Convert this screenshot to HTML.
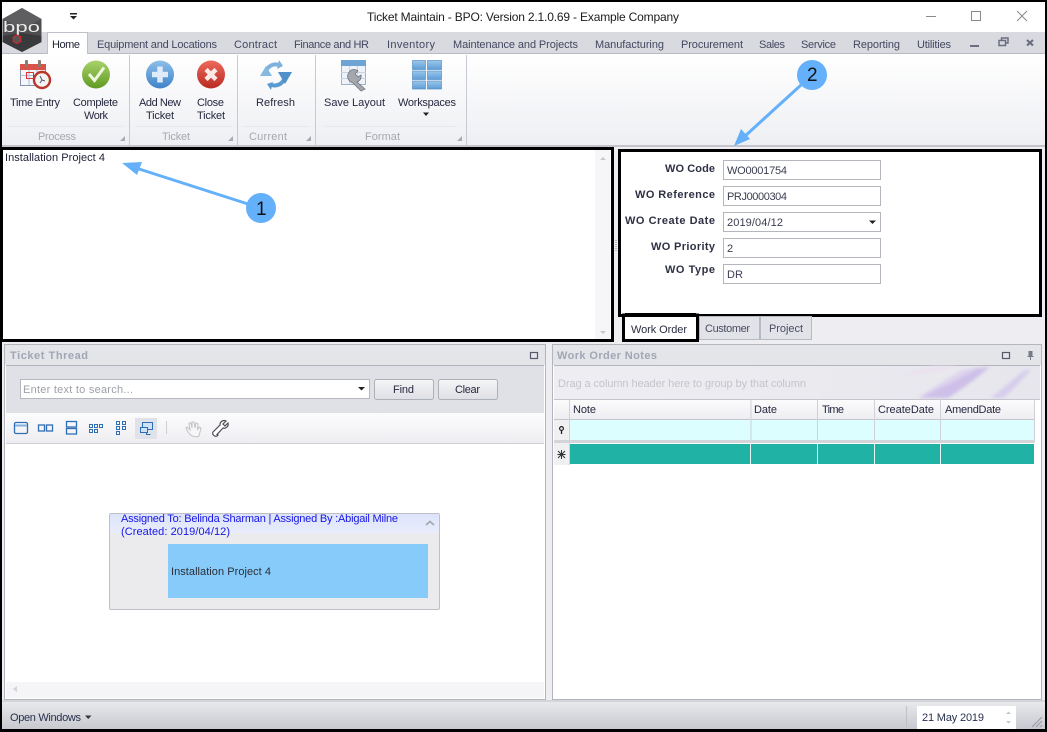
<!DOCTYPE html>
<html><head><meta charset="utf-8"><title>Ticket Maintain</title>
<style>
html,body{margin:0;padding:0;background:#fff}
svg{display:block;width:1047px;height:732px}
text{font-family:"Liberation Sans",sans-serif;font-size:11px;fill:#25283f}
.tab{fill:#43475f}
.grp{fill:#a6a8b0}
.lab{font-weight:bold;fill:#2e3144}
.inp{fill:#3a3d50}
.hd{font-weight:bold;fill:#a2a5b3}
.bl{fill:#1616e6}
</style></head><body>
<svg xmlns="http://www.w3.org/2000/svg" width="1047" height="732" viewBox="0 0 1047 732">
<defs>
<linearGradient id="rib" x1="0" y1="0" x2="0" y2="1"><stop offset="0" stop-color="#fff"/><stop offset="1" stop-color="#eeeff3"/></linearGradient>
<linearGradient id="st" x1="0" y1="0" x2="0" y2="1"><stop offset="0" stop-color="#e8e9ec"/><stop offset="1" stop-color="#c6c8ce"/></linearGradient>
<linearGradient id="grn" x1="0" y1="0" x2="0" y2="1"><stop offset="0" stop-color="#a9d36a"/><stop offset="1" stop-color="#5f9a22"/></linearGradient>
<linearGradient id="blu" x1="0" y1="0" x2="0" y2="1"><stop offset="0" stop-color="#8dbfe8"/><stop offset="1" stop-color="#3e82c8"/></linearGradient>
<linearGradient id="red" x1="0" y1="0" x2="0" y2="1"><stop offset="0" stop-color="#ec6a5c"/><stop offset="1" stop-color="#b92a22"/></linearGradient>
<linearGradient id="cell" x1="0" y1="0" x2="0" y2="1"><stop offset="0" stop-color="#9cc7ea"/><stop offset="1" stop-color="#5c9dd8"/></linearGradient>
<linearGradient id="hdr" x1="0" y1="0" x2="0" y2="1"><stop offset="0" stop-color="#fcfcfd"/><stop offset="1" stop-color="#eeeef2"/></linearGradient>
<linearGradient id="card" x1="0" y1="0" x2="0" y2="1"><stop offset="0" stop-color="#dde4fb"/><stop offset="1" stop-color="#e8ecfb"/></linearGradient>
<linearGradient id="grpb" x1="0" y1="0" x2="1" y2="0"><stop offset="0" stop-color="#eeeef2"/><stop offset="1" stop-color="#e6e6ec"/></linearGradient>
<linearGradient id="btn" x1="0" y1="0" x2="0" y2="1"><stop offset="0" stop-color="#f5f5f7"/><stop offset="1" stop-color="#dfe0e5"/></linearGradient>
<filter id="soft" x="-10%" y="-20%" width="120%" height="140%"><feGaussianBlur stdDeviation="1.500"/></filter>
</defs>

<rect width="1047" height="732" fill="#eeeef2"/>
<!-- title bar -->
<rect x="0" y="0" width="1047" height="32" fill="#fff"/>
<text x="367" y="21" textLength="312" style="font-size:12px;fill:#1c1c1c">Ticket Maintain - BPO: Version 2.1.0.69 - Example Company</text>
<path d="M70 13h7v1.500h-7z" fill="#222"/><path d="M70 16h7l-3.500 3.500z" fill="#222"/>
<path d="M926 16.500h10" stroke="#8a8a8a" fill="none"/>
<rect x="971.500" y="11.500" width="9" height="9" stroke="#8a8a8a" fill="none"/>
<path d="M1017 11l10 10M1027 11l-10 10" stroke="#8a8a8a" fill="none"/>

<!-- tab strip -->
<rect x="0" y="32" width="1047" height="21" fill="#d9dae0"/>
<rect x="0" y="53" width="1047" height="1" fill="#b9bbc4"/>
<rect x="47.500" y="32.500" width="40" height="22" fill="#fff" stroke="#bfc1ca"/>
<rect x="48" y="52" width="39" height="3" fill="#fff"/>
<text x="52" y="48" textLength="28" style="fill:#1f2233">Home</text>
<text class="tab" x="97" y="48" textLength="120">Equipment and Locations</text>
<text class="tab" x="234" y="48" textLength="43">Contract</text>
<text class="tab" x="294" y="48" textLength="75">Finance and HR</text>
<text class="tab" x="387" y="48" textLength="48">Inventory</text>
<text class="tab" x="453" y="48" textLength="125">Maintenance and Projects</text>
<text class="tab" x="595" y="48" textLength="69">Manufacturing</text>
<text class="tab" x="681" y="48" textLength="62">Procurement</text>
<text class="tab" x="759" y="48" textLength="26">Sales</text>
<text class="tab" x="801" y="48" textLength="35">Service</text>
<text class="tab" x="853" y="48" textLength="47">Reporting</text>
<text class="tab" x="917" y="48" textLength="34">Utilities</text>
<rect x="970" y="45" width="9" height="2" fill="#6b6e80"/>
<path d="M999 45.500h6.500v-5h-6.500v5zM1001.500 40.500v-2.500h6.500v5h-2.500" fill="none" stroke="#6b6e80" stroke-width="1.500"/>
<path d="M1027 40l6 5.500M1033 40l-6 5.500" stroke="#6b6e80" stroke-width="2.200" fill="none"/>

<!-- ribbon -->
<rect x="2" y="54" width="1043" height="91" fill="url(#rib)"/>
<rect x="0" y="145" width="1047" height="2" fill="#c4c5cc"/>
<path d="M129.500 55v90M237.500 55v90M315.500 55v90M466.500 55v90" stroke="#c9cad1" fill="none"/>
<path d="M8 126.500h115M136 126.500h96M244 126.500h65M325 126.500h130" stroke="#e6e7ea" fill="none"/>

<!-- Time entry icon -->
<rect x="20.500" y="64.500" width="25" height="21" fill="#f4f6fb" stroke="#8a93ad"/>
<rect x="20" y="64" width="26" height="6" fill="#d9534a"/>
<rect x="25" y="60" width="3" height="7" rx="1" fill="#8a7d70"/>
<rect x="38" y="60" width="3" height="7" rx="1" fill="#8a7d70"/>
<path d="M20.500 75.500h25M29 70v15M37 70v15" stroke="#a9c0e0" fill="none"/>
<rect x="26.500" y="72.500" width="7" height="6" fill="none" stroke="#d33"/>
<circle cx="42" cy="80" r="8" fill="#f3f3f3" stroke="#b8362c" stroke-width="2.400"/>
<path d="M42 80l-2-4M42 80l3 1M42 80l-2 3" stroke="#556" fill="none"/>

<!-- Complete -->
<circle cx="96" cy="74.500" r="14" fill="url(#grn)"/>
<path d="M89 74l5.500 6.500 9.500-13" stroke="#eef6dd" stroke-width="3" fill="none"/>
<!-- Add -->
<circle cx="160" cy="74.500" r="14" fill="url(#blu)"/>
<path d="M160 66.500v16M152 74.500h16" stroke="#dfecf8" stroke-width="5.500" fill="none"/>
<!-- Close -->
<circle cx="211" cy="74.500" r="14" fill="url(#red)"/>
<path d="M206 69.500l10 10M216 69.500l-10 10" stroke="#fbe9e6" stroke-width="4.500" fill="none"/>
<!-- Refresh -->
<path d="M266.500 70a10.500 10.500 0 0 1 14-4.500" fill="none" stroke="#7fb2dc" stroke-width="4"/>
<path d="M284 79.500a10.500 10.500 0 0 1-14 5" fill="none" stroke="#5b9ad0" stroke-width="4"/>
<path d="M260 76l6-10 6 10z" fill="#86b9e0"/>
<path d="M278 72h14l-7 12z" fill="#4f8fca"/>
<path d="M279 60l4 6-6 3z" fill="#7fb2dc"/>
<path d="M271 90l-4-6 6-2z" fill="#5b9ad0"/>
<!-- Save layout -->
<rect x="341.500" y="60.500" width="24" height="24" fill="#eef3f9" stroke="#9fb2c9"/>
<rect x="341" y="60" width="25" height="6" fill="#6ea3d6"/>
<path d="M341 72.500h25M341 78.500h25M349.500 66v18M357.500 66v18" stroke="#c5d3e3" fill="none"/>
<path d="M350 71a6 6 0 0 1 8 0l-3 3 3 3 3-2a6 6 0 0 1-4 7l8 7-4 2-8-8a7 7 0 0 1-5-9z" fill="#a4a8ae" stroke="#70747c" stroke-width=".8"/>
<!-- Workspaces -->
<g fill="url(#cell)" stroke="#5a8fc4" stroke-width=".7">
<rect x="412.500" y="60.500" width="13" height="9"/><rect x="427.500" y="60.500" width="14" height="9"/>
<rect x="412.500" y="71" width="13" height="8.500"/><rect x="427.500" y="71" width="14" height="8.500"/>
<rect x="412.500" y="81" width="13" height="8"/><rect x="427.500" y="81" width="14" height="8"/>
</g>

<text x="10" y="106" textLength="50">Time Entry</text>
<text x="73" y="106" textLength="45">Complete</text>
<text x="84" y="119" textLength="24">Work</text>
<text x="139" y="106" textLength="42">Add New</text>
<text x="146" y="119" textLength="28">Ticket</text>
<text x="197" y="106" textLength="27">Close</text>
<text x="197" y="119" textLength="28">Ticket</text>
<text x="256" y="106" textLength="39">Refresh</text>
<text x="324" y="106" textLength="61">Save Layout</text>
<text x="398" y="106" textLength="58">Workspaces</text>
<path d="M423 112.500h6l-3 3.500z" fill="#222"/>
<text class="grp" x="38" y="140" textLength="38">Process</text>
<text class="grp" x="162" y="140" textLength="28">Ticket</text>
<text class="grp" x="249" y="140" textLength="38">Current</text>
<text class="grp" x="365" y="140" textLength="35">Format</text>
<g fill="#a9abb3"><path d="M125 136v5h-5z"/><path d="M233 136v5h-5z"/><path d="M311 136v5h-5z"/><path d="M462 136v5h-5z"/></g>

<!-- box 1 -->
<rect x="1.500" y="148.500" width="611" height="192" fill="#fff" stroke="#000" stroke-width="3"/>
<rect x="595" y="150" width="15" height="189" fill="#f6f6f8"/>
<path d="M600 160l3-3 3 3zM600 331l3 3 3-3z" fill="#c8c9cf"/>
<text x="5" y="161" textLength="100" style="fill:#20233a">Installation Project 4</text>

<!-- splitter dots -->
<path d="M615.500 240v12M616.500 240v12" stroke="#b4b6bd" stroke-dasharray="1 1" fill="none"/>

<!-- box 2 -->
<rect x="619.500" y="150.500" width="421" height="165" fill="#fff" stroke="#000" stroke-width="3"/>
<text class="lab" x="665" y="172" textLength="50">WO Code</text>
<text class="lab" x="635" y="198" textLength="80">WO Reference</text>
<text class="lab" x="625" y="224" textLength="90">WO Create Date</text>
<text class="lab" x="651" y="250" textLength="64">WO Priority</text>
<text class="lab" x="665" y="273" textLength="50">WO Type</text>
<g fill="#fff" stroke="#b4b6be">
<rect x="723.500" y="160.500" width="157" height="19"/>
<rect x="723.500" y="186.500" width="157" height="19"/>
<rect x="723.500" y="212.500" width="157" height="19"/>
<rect x="723.500" y="238.500" width="157" height="19"/>
<rect x="723.500" y="264.500" width="157" height="19"/>
</g>
<text class="inp" x="727" y="174" textLength="60">WO0001754</text>
<text class="inp" x="727" y="200" textLength="60">PRJ0000304</text>
<text class="inp" x="727" y="226" textLength="56">2019/04/12</text>
<text class="inp" x="727" y="252">2</text>
<text class="inp" x="727" y="278">DR</text>
<path d="M869 220.500h7l-3.500 3.500z" fill="#222"/>

<!-- lower tabs -->
<rect x="699.500" y="316.500" width="60" height="23" fill="#e2e3e8" stroke="#b8bac2"/>
<rect x="760.500" y="316.500" width="51" height="23" fill="#e2e3e8" stroke="#b8bac2"/>
<rect x="623.500" y="315" width="74" height="25.500" fill="#fff" stroke="#000" stroke-width="3"/>
<rect x="625" y="313" width="71" height="4" fill="#000"/>
<text x="631" y="333" textLength="56" style="fill:#2a2d42">Work Order</text>
<text x="705" y="332" textLength="45" style="fill:#4a4d62">Customer</text>
<text x="769" y="332" textLength="34" style="fill:#4a4d62">Project</text>

<!-- Ticket Thread panel -->
<rect x="4.500" y="344.500" width="541" height="355" fill="#fff" stroke="#b3b5bd"/>
<rect x="5" y="345" width="540" height="20" fill="#e4e5e9"/>
<path d="M6 365.500h538" stroke="#b3b5bd"/>
<rect x="6" y="366" width="538" height="47" fill="#e0e1e6"/>
<text class="hd" x="10" y="359" textLength="78">Ticket Thread</text>
<rect x="530.500" y="352.500" width="7" height="6" fill="none" stroke="#55586a" stroke-width="1.200"/>
<rect x="20.500" y="379.500" width="349" height="19" fill="#fff" stroke="#b6b8c0"/>
<text x="23" y="393" textLength="110" style="fill:#9d9fa9">Enter text to search...</text>
<path d="M358 387h7l-3.500 3.500z" fill="#222"/>
<rect x="374.500" y="379.500" width="59" height="20" rx="2" fill="url(#btn)" stroke="#aeb0b8"/>
<rect x="438.500" y="379.500" width="59" height="20" rx="2" fill="url(#btn)" stroke="#aeb0b8"/>
<text x="393" y="393" textLength="21">Find</text>
<text x="455" y="393" textLength="25">Clear</text>

<rect x="6" y="413" width="538" height="30" fill="url(#hdr)"/>
<path d="M6 443.500h538" stroke="#d0d1d7"/>
<!-- toolbar icons -->
<g fill="none" stroke="#2f6db5" stroke-width="1.300">
<rect x="14.500" y="422.500" width="13" height="11" rx="1.500"/><path d="M15 425.500h12" stroke="#7fb0e0" stroke-width="2"/>
<rect x="38.500" y="425" width="6" height="6"/><rect x="46.500" y="425" width="6" height="6"/>
<rect x="66.500" y="421.500" width="10" height="5.500"/><rect x="66.500" y="428.500" width="10" height="5.500"/>
<g stroke-width="1"><rect x="89.500" y="424.500" width="3" height="3"/><rect x="94.500" y="424.500" width="3" height="3"/><rect x="99.500" y="424.500" width="3" height="3"/><rect x="89.500" y="429.500" width="3" height="3"/><rect x="94.500" y="429.500" width="3" height="3"/>
<rect x="116.500" y="421.500" width="3" height="3"/><rect x="122.500" y="421.500" width="3" height="3"/><rect x="116.500" y="426.500" width="3" height="3"/><rect x="122.500" y="426.500" width="3" height="3"/><rect x="116.500" y="431.500" width="3" height="3"/></g>
</g>
<rect x="135" y="418" width="22" height="21" fill="#dfe2e9"/>
<g fill="#cfe2f5" stroke="#2f6db5"><rect x="142.500" y="422.500" width="10" height="7"/><rect x="140.500" y="427.500" width="7" height="5"/></g>
<path d="M146.500 432.500v2h4" stroke="#2f6db5" fill="none"/>
<path d="M166.500 421v13" stroke="#cfd0d6"/>
<path d="M192 436c-3-2-5-5-6-8l1-1 3 3-1-7 2 0 1 5 0-6 2 0 1 6 1-5 2 1-.5 6 1.500-3 2 1-2 8-2 1z" fill="#f6f6f7" stroke="#c2c3c9"/>
<path d="M213 432l7-7a4 4 0 0 1 1.500-3.500 4 4 0 0 1 4.500-.5l-3 3 2 2 3-3a4 4 0 0 1-5 5l-6 6.500 1 .5a2.500 2.500 0 0 1-4 .5 2.500 2.500 0 0 1-1-3.500z" fill="#fff" stroke="#4a4c55" stroke-width="1.200"/>

<!-- card -->
<rect x="109.500" y="513.500" width="330" height="96" rx="1.500" fill="#ebebed" stroke="#bfc0c7"/>
<rect x="110" y="514" width="329" height="19" fill="url(#card)"/>
<text class="bl" x="121" y="522" textLength="277">Assigned To: Belinda Sharman | Assigned By :Abigail Milne</text>
<text class="bl" x="121" y="535" textLength="109">(Created: 2019/04/12)</text>
<path d="M426 525l4-3.500 4 3.500" fill="none" stroke="#a4a6ae" stroke-width="1.600"/>
<rect x="168" y="544" width="260" height="54" fill="#87cbfa"/>
<text x="171" y="575" textLength="100" style="fill:#2b2e3a">Installation Project 4</text>
<!-- h scrollbar -->
<rect x="6" y="682" width="538" height="16" fill="#f5f5f8"/>
<path d="M17 686l-4 3 4 3z" fill="#d3d4d9"/>

<!-- Work Order Notes -->
<rect x="552.500" y="344.500" width="489" height="355" fill="#fff" stroke="#b3b5bd"/>
<rect x="553" y="345" width="488" height="20" fill="#e4e5e9"/>
<path d="M554 365.500h486" stroke="#b3b5bd"/>
<text class="hd" x="557" y="359" textLength="100">Work Order Notes</text>
<rect x="1002.500" y="352.500" width="7" height="6" fill="none" stroke="#55586a" stroke-width="1.200"/>
<path d="M1028.500 351h4v5h1v1h-2.500v3h-1v-3h-2.500v-1h1z" fill="#777a88"/>
<rect x="554" y="366" width="486" height="33" fill="url(#grpb)"/>
<g filter="url(#soft)">
<path d="M918 398c15-10 30-20 45-28l20-4c-15 10-25 20-35 32z" fill="#ddd2ee"/>
<path d="M920 398c15-8 35-16 55-28l15-4c-12 12-30 24-42 32z" fill="#cdbfe8"/>
<path d="M990 398c12-8 22-18 35-28l6 0c-10 10-18 20-28 28z" fill="#d6cdec"/>
<path d="M900 376c15-2 40-6 60-10l-25 0c-12 3-25 6-35 10z" fill="#ecdff0"/>
</g>
<text x="558" y="387" textLength="248" style="fill:#c4c5cc">Drag a column header here to group by that column</text>

<rect x="554" y="399" width="481" height="20" fill="url(#hdr)"/>
<rect x="554" y="399" width="486" height="1" fill="#c3c4cc"/>
<rect x="554" y="419" width="481" height="1" fill="#c3c4cc"/>
<rect x="554" y="420" width="16" height="45" fill="#f0f0f3"/>
<rect x="570" y="420" width="465" height="20" fill="#dcfeff"/>
<rect x="554" y="440" width="481" height="3" fill="#d4d5db"/>
<rect x="570" y="444" width="464" height="20" fill="#1fb2a5"/>
<g stroke="#cfd0d8" fill="none"><path d="M569.500 399v66M751 399.500v41M817.500 399v41M874.500 399v41M940.500 399v41M1034.500 399v41"/></g>
<g stroke="#e6f5f3" fill="none"><path d="M750.500 444v20M817.500 444v20M874.500 444v20M940.500 444v20"/></g>
<text x="573" y="413" textLength="23">Note</text>
<text x="754" y="413" textLength="23">Date</text>
<text x="822" y="413" textLength="22">Time</text>
<text x="878" y="413" textLength="56">CreateDate</text>
<text x="945" y="413" textLength="56">AmendDate</text>
<circle cx="561.500" cy="428.500" r="1.900" fill="none" stroke="#222" stroke-width="1.200"/><path d="M561.500 430v4" stroke="#222" stroke-width="1.300"/>
<path d="M558 451l7 7M565 451l-7 7M561.500 450v9M557.500 454.500h8" stroke="#333" fill="none"/>

<!-- status bar -->
<rect x="0" y="702" width="1047" height="28" fill="url(#st)"/>
<rect x="0" y="700" width="1047" height="2" fill="#d4d5da"/>
<text x="10" y="721" textLength="71" style="fill:#27304f">Open Windows</text>
<path d="M85 715.500h6.500l-3.250 3.500z" fill="#333"/>
<path d="M906.500 706v21" stroke="#c0c1c7"/>
<rect x="917" y="706" width="99" height="23" fill="#fff"/>
<text x="922" y="721" textLength="62" style="fill:#27304f">21 May 2019</text>
<path d="M1006 714l2.500-2.500 2.500 2.500zM1006 721l2.500 2.500 2.500-2.500z" fill="#c3c4ca"/>
<path d="M1032 727l10-10M1036 727l6-6M1040 727l2-2" stroke="#9a9ba2" fill="none"/>

<!-- outer border -->
<rect x="1" y="1" width="1045" height="729.500" fill="none" stroke="#000" stroke-width="2"/>
<rect x="0" y="729" width="1047" height="3" fill="#000"/>

<!-- logo -->
<path d="M22 8l19.500 11v23L22 52 2.500 42V19z" fill="#4e4e50"/>
<path d="M22 8l19.500 11-19.500 10L2.500 19z" fill="#5e5e60"/>
<path d="M22 52l19.500-10v-6L22 33 2.500 36v6z" fill="#3a3a3c"/>
<text x="3" y="32" textLength="37" lengthAdjust="spacingAndGlyphs" style="font-size:15px;fill:#ececec">bpo</text>
<path d="M17 35l3.800 2.100v4.300L17 43.500l-3.800-2.100v-4.300z" fill="#555" stroke="#d8262a" stroke-width="1.200"/>

<!-- callouts -->
<g stroke="#64b0fb" fill="#64b0fb">
<path d="M248 204L136 168" stroke-width="3"/>
<path d="M122 163l20-1-5 13z" stroke="none"/>
<circle cx="261" cy="208" r="15" stroke="none"/>
<path d="M801 85L744 137" stroke-width="3"/>
<path d="M734 146l7-17 9 10z" stroke="none"/>
<circle cx="812" cy="75" r="15" stroke="none"/>
</g>
<text x="256" y="215" textLength="10" style="font-size:19px;fill:#111">1</text>
<text x="807" y="81" textLength="10" style="font-size:19px;fill:#111">2</text>
</svg>
</body></html>
